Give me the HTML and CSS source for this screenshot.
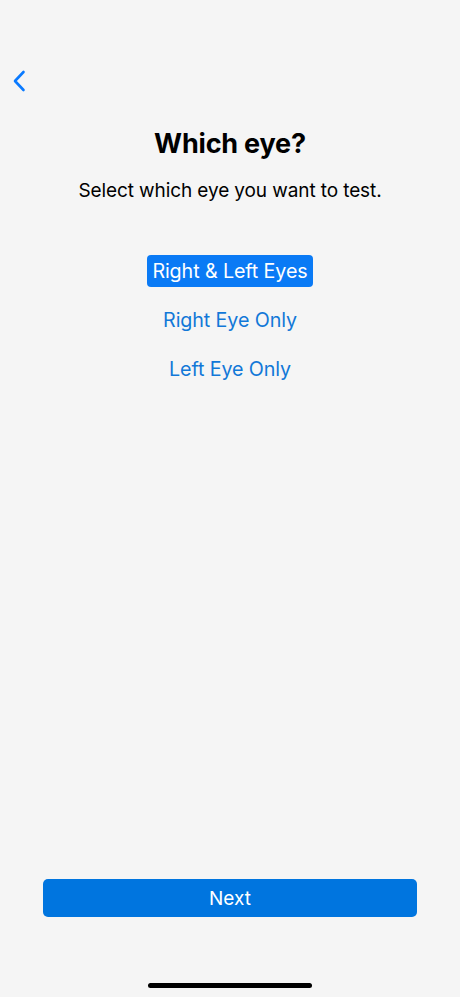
FILE: index.html
```html
<!DOCTYPE html>
<html lang="en">
<head>
<meta charset="utf-8">
<link rel="stylesheet" href="styles.css">
</head>
<body>
<div class="screen">
  <div class="nav">
    <button class="back" aria-label="Back">
      <svg width="14" height="22" viewBox="0 0 14 22"><path d="M11.5 2 L3 11 L11.5 20" fill="none" stroke="#0a7aff" stroke-width="2.6" stroke-linecap="round" stroke-linejoin="round"/></svg>
    </button>
  </div>
  <h1 class="title">Which eye?</h1>
  <p class="subtitle">Select which eye you want to test.</p>
  <div class="options">
    <button class="option selected">Right &amp; Left Eyes</button>
    <button class="option">Right Eye Only</button>
    <button class="option">Left Eye Only</button>
  </div>
  <div class="spacer"></div>
  <button class="next">Next</button>
  <div class="home-bar"><span class="indicator"></span></div>
</div>
</body>
</html>
```
FILE: styles.css
```css
html, body {
  margin: 0;
  padding: 0;
  background: #f5f5f5;
}
body {
  font-family: Inter, "Noto Sans", sans-serif;
  color: #000;
}
.screen {
  display: flex;
  flex-direction: column;
  height: 997px;
  box-sizing: border-box;
}
.nav {
  padding: 70px 0 0 12px;
  height: 22px;
}
.back {
  border: 0;
  background: none;
  padding: 0;
  width: 14px;
  height: 22px;
  display: block;
}
.back svg { display: block; }
.title {
  margin: 36px 0 0;
  text-align: center;
  font-size: 27px;
  line-height: 32px;
  font-weight: 700;
  letter-spacing: -0.2px;
}
.subtitle {
  margin: 19px 0 0;
  text-align: center;
  font-size: 19px;
  line-height: 24px;
  letter-spacing: -0.1px;
}
.options {
  margin-top: 52px;
  display: flex;
  flex-direction: column;
  align-items: center;
  gap: 17px;
}
.option {
  font-family: inherit;
  border: 0;
  background: none;
  color: #1278d8;
  font-size: 19.7px;
  line-height: 32px;
  height: 32px;
  padding: 0 5px;
  border-radius: 4px;
  letter-spacing: -0.1px;
}
.option.selected {
  background: #0a7af5;
  color: #fff;
}
.spacer { flex: 1; }
.next {
  font-family: inherit;
  margin: 0 43px;
  height: 38px;
  border: 0;
  border-radius: 5px;
  background: #0075df;
  color: #fff;
  font-size: 19px;
}
.home-bar {
  height: 80px;
  display: flex;
  justify-content: center;
  align-items: flex-end;
  padding-bottom: 9px;
  box-sizing: border-box;
}
.indicator {
  width: 164px;
  height: 5px;
  border-radius: 3px;
  background: #000;
}
```
